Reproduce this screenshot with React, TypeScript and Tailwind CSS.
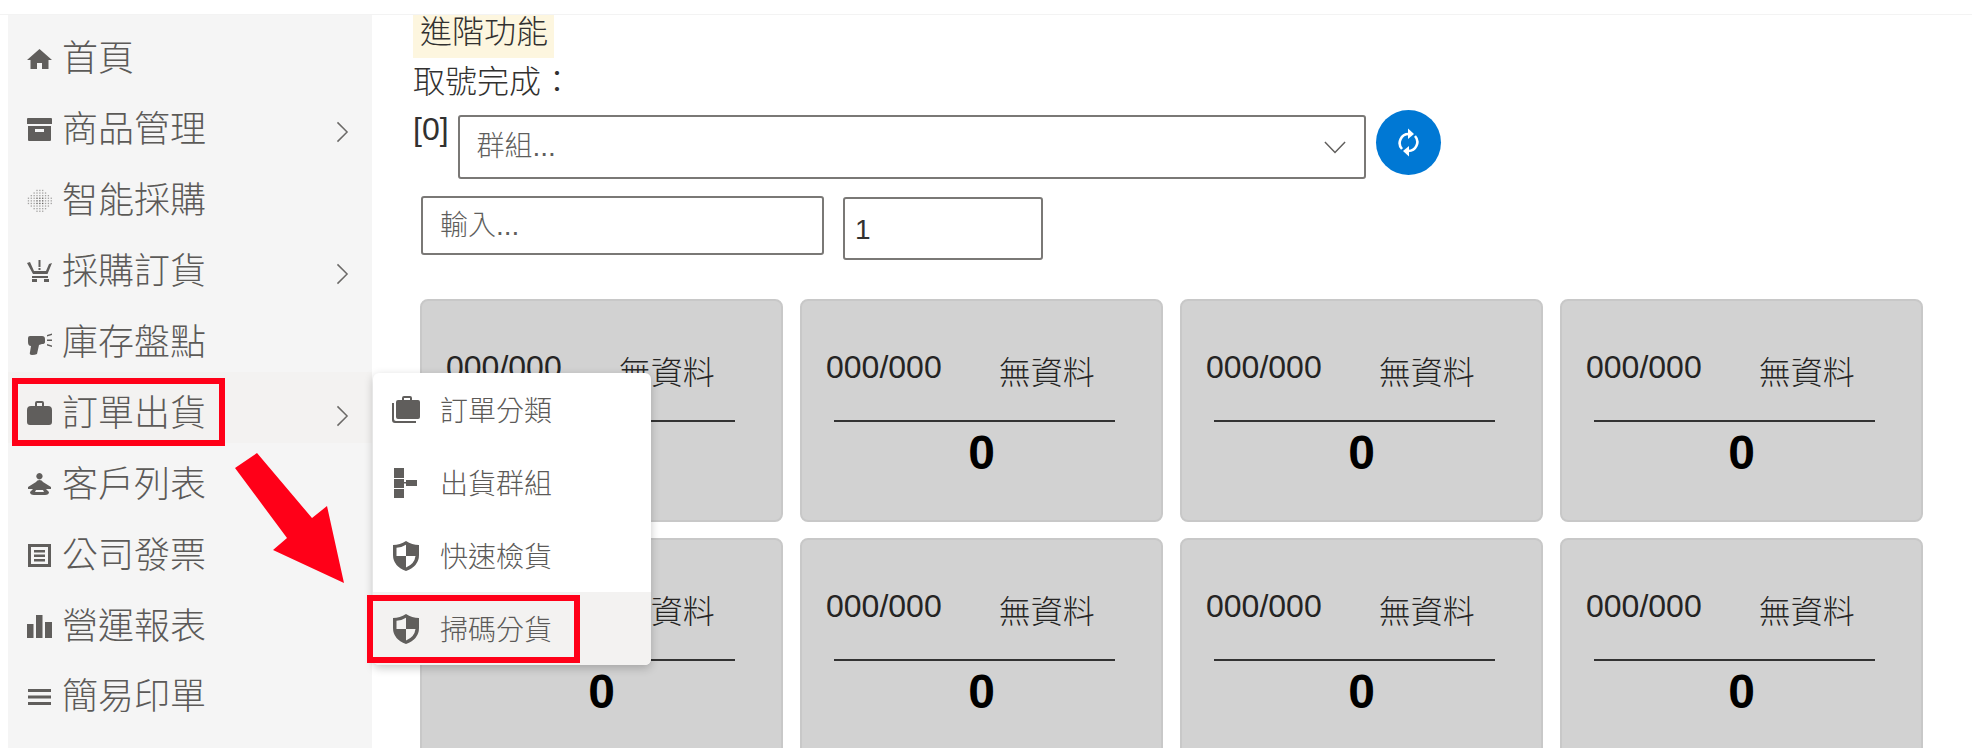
import React from "react";

const C = "#605e5c";

const Dots = () => {
  const items: React.ReactNode[] = [];
  for (let y = 0; y < 9; y++) for (let x = 0; x < 9; x++) {
    const d = Math.hypot(x - 4, y - 4);
    const cross = x === 3 || x === 4 || x === 5 || y === 3 || y === 4 || y === 5;
    if (d > 4.7 || (!cross && d > 3.7)) continue;
    items.push(<rect key={`${x}-${y}`} x={0.8 + x * 2.85} y={1.8 + y * 2.6} width={1.3} height={1.3} fill={C} opacity={d < 2 ? 1 : 0.55} />);
  }
  return <svg viewBox="0 0 25 25" className="w-[25px] h-[25px]">{items}</svg>;
};

const Icon = ({ d }: { d: string }) => (
  <svg viewBox="0 0 25 25" className="w-[25px] h-[25px]" fill={C} fillRule="evenodd"><path d={d} /></svg>
);

const paths = {
  home: "M12.5 3 L25 14 H21.5 V23 H15 V17 H10 V23 H3.5 V14 H0 Z",
  box: "M1 1 H24 Q25 1 25 2 V7 H0 V2 Q0 1 1 1 Z M1 9 H24 V23 Q24 24 23 24 H2 Q1 24 1 23 Z M8 12 V15 H17 V12 Z",
  cart: "M0 4 L3 3 L7 12 H19 L22 5 L25 4 L20.5 15 H6 Z M11.5 1 H13.5 V8 H11.5 Z M11.5 9 H13.5 V11 H11.5 Z M5 17 H21 V19 H5 Z M5 20 H10 V23 H5 Z M17 20 H22 V23 H17 Z",
  gun: "M3 6 H15 Q18 6 18 9 V12 Q18 14 15 14 L12 15 L10 24 Q8 25 5 25 Q2 25 3 22 L4 16 Q1 16 1 12 V8 Q1 6 3 6 Z M20 5 L25 3.5 V5 L20 6.5 Z M20 9.5 H25 V11 H20 Z M20 14 L25 15.5 V17 L20 15.5 Z",
  bag: "M8 6 V3 Q8 1 10 1 H15 Q17 1 17 3 V6 H21 Q25 6 25 10 V22 Q25 25 22 25 H3 Q0 25 0 22 V10 Q0 6 4 6 Z M10 6 H15 V3 H10 Z",
  person: "M12.5 2 A3.2 3.2 0 1 1 12.4 2 Z M12.5 9 Q15 9 16 11 L24 16 V18 L19 18 L22 21 Q22 24 18 24 H7 Q3 24 3 21 L6 18 L1 18 V16 L9 11 Q10 9 12.5 9 Z M9 19 L8 21 H17 L16 19 Z",
  invoice: "M1 2 H24 V25 H1 Z M4 5 V22 H21 V5 Z M7 8 H18 V10.5 H7 Z M7 12.5 H18 V15 H7 Z M7 17 H18 V19.5 H7 Z",
  bars: "M0 11 H6.5 V25 H0 Z M9 2 H15.5 V25 H9 Z M18 9 H25 V25 H18 Z",
  menu: "M1 5 H24 V8 H1 Z M1 11.5 H24 V14.5 H1 Z M1 18 H24 V21 H1 Z",
};

const Chevron = () => (
  <svg viewBox="0 0 14 24" className="w-[13px] h-[22px]" fill="none" stroke="#6b6967" strokeWidth="1.6"><path d="M1.5 1.5 L12 12 L1.5 22.5" /></svg>
);

const nav = [
  { t: "首頁", i: <Icon d={paths.home} /> },
  { t: "商品管理", i: <Icon d={paths.box} />, c: true },
  { t: "智能採購", i: <Dots /> },
  { t: "採購訂貨", i: <Icon d={paths.cart} />, c: true },
  { t: "庫存盤點", i: <Icon d={paths.gun} /> },
  { t: "訂單出貨", i: <Icon d={paths.bag} />, c: true, a: true },
  { t: "客戶列表", i: <Icon d={paths.person} /> },
  { t: "公司發票", i: <Icon d={paths.invoice} /> },
  { t: "營運報表", i: <Icon d={paths.bars} /> },
  { t: "簡易印單", i: <Icon d={paths.menu} /> },
];

const Shield = () => (
  <svg viewBox="0 0 26 30" className="w-[26px] h-[30px]" fill={C} fillRule="evenodd">
    <path d="M13 0 Q19 4 26 4 V14 Q26 25 13 30 Q0 25 0 14 V4 Q7 4 13 0 Z M13 15 H3.5 V6.8 Q9 6.5 13 3.8 Z M13 15 H22.5 Q21.5 23 13 26.5 Z" />
  </svg>
);

const menu = [
  {
    t: "訂單分類",
    i: (
      <svg viewBox="0 0 28 28" className="w-[28px] h-[28px]" fill={C} fillRule="evenodd">
        <path d="M2 7 V23 Q2 25 4 25 H24 V27 H3 Q0 27 0 24 V7 Z M10 4 V2 Q10 0 12 0 H18 Q20 0 20 2 V4 H26 Q28 4 28 6 V21 Q28 23 26 23 H6 Q4 23 4 21 V6 Q4 4 6 4 Z M12 4 H18 V2 H12 Z" />
      </svg>
    ),
  },
  {
    t: "出貨群組",
    i: (
      <svg viewBox="0 0 28 30" className="w-[28px] h-[30px]" fill={C}>
        <path d="M2 0 H12 V10 H2 Z M2 11 H12 V20 H2 Z M2 21 H12 V30 H2 Z M12 14 H14 V15.5 H12 Z M14 12 H25 V18 H14 Z" />
      </svg>
    ),
  },
  { t: "快速檢貨", i: <Shield /> },
  { t: "掃碼分貨", i: <Shield />, h: true },
];

const Card = () => (
  <div className="h-[223px] rounded-lg border-2 border-[#c8c8c8] bg-[#d2d2d2] pl-[24px] pt-[46px] text-black">
    <div className="flex h-[73px] items-start text-[32px] leading-[40px] text-[#252423]">
      <span>000/000</span>
      <span className="ml-[57px] mt-[6px] text-[32px] font-light">無資料</span>
    </div>
    <div className="ml-[8px] h-[2px] w-[281px] bg-[#333333]" />
    <div className="-ml-[24px] mt-[3px] h-[56px] text-center text-[48px] font-bold leading-[56px]">0</div>
  </div>
);

export default function App() {
  return (
    <div
      className="relative flex h-[748px] w-full overflow-hidden bg-white pt-[15px] text-[#323130]"
      style={{ fontFamily: '"Liberation Sans","Noto Sans CJK TC",sans-serif' }}
    >
      <div className="absolute left-0 right-0 top-[14px] h-px bg-[#f3f3f3]" />

      <aside className="ml-2 h-full w-[364px] shrink-0 bg-[#f5f5f5] pt-[3px]">
        {nav.map((n) => (
          <div key={n.t} className={`flex h-[70.9px] items-center pl-[19px] ${n.a ? "bg-[#f3f2f1]" : ""}`}>
            <span className="mt-[10px] flex w-[25px] justify-center">{n.i}</span>
            <span className="ml-[10px] mt-[12px] text-[36px] font-light leading-none text-[#5c5a58]">{n.t}</span>
            {n.c && (
              <span className="ml-auto mr-[23px] mt-[16px] flex">
                <Chevron />
              </span>
            )}
          </div>
        ))}
      </aside>

      <main className="min-w-0 flex-1 pl-[41px]">
        <div className="h-[43px] w-[141px] bg-[#fdf6df] pl-[7px] text-[32px] font-light leading-[34px]">進階功能</div>
        <div className="h-[48px] text-[32px] font-light leading-[48px]">取號完成：</div>
        <div className="flex items-start">
          <span className="mt-[3px] w-[44.5px] text-[32px] leading-[40px]">[0]</span>
          <div className="mt-[9px] flex h-[64px] w-[908px] items-center justify-between rounded-[3px] border-2 border-[#7a7876] pl-[17px] pr-[18px] text-[28px] font-light text-[#605e5c]">
            <span>群組...</span>
            <svg viewBox="0 0 24 14" className="h-[13px] w-[22px]" fill="none" stroke="#605e5c" strokeWidth="1.6"><path d="M1 1 L12 12.5 L23 1" /></svg>
          </div>
          <button className="ml-[10px] mt-[4px] flex h-[65px] w-[65px] items-center justify-center rounded-full bg-[#0078d4]">
            <svg viewBox="0 0 21 29" className="h-[29px] w-[21px]" fill="none" stroke="#ffffff" strokeWidth="2.6">
              <path d="M4 21 A9 9 0 0 1 11 6" />
              <path d="M17 8 A9 9 0 0 1 10 23" />
              <path d="M10 0.5 L16 6 L10 11 Z" fill="#ffffff" stroke="none" />
              <path d="M11 18 L5 23 L11 28.5 Z" fill="#ffffff" stroke="none" />
            </svg>
          </button>
        </div>
        <div className="ml-2 mt-[17px] flex items-start">
          <div className="flex h-[59px] w-[403px] items-center rounded-[3px] border-2 border-[#7a7876] pl-[17px] text-[28px] font-light text-[#605e5c]">輸入...</div>
          <div className="ml-[19px] mt-px flex h-[63px] w-[200px] items-center rounded-[3px] border-2 border-[#7a7876] pl-[10px] pt-[2px] text-[28px] text-[#323130]">1</div>
        </div>
        <div className="ml-[7px] mt-[39px] grid grid-cols-[repeat(4,363px)] gap-x-[17px] gap-y-[16px]">
          {Array.from({ length: 8 }).map((_, i) => (
            <Card key={i} />
          ))}
        </div>
      </main>

      {/* submenu flyout */}
      <div className="absolute left-[373px] top-[373px] w-[278px] overflow-hidden rounded-md bg-white shadow-[0_3px_10px_rgba(0,0,0,0.22)]">
        {menu.map((m) => (
          <div key={m.t} className={`flex h-[73px] items-center pl-[19px] ${m.h ? "bg-[#f3f2f1]" : ""}`}>
            <span className="flex w-[28px] justify-center">{m.i}</span>
            <span className="ml-[20px] mt-[4px] text-[28px] font-light leading-none text-[#5c5a58]">{m.t}</span>
          </div>
        ))}
      </div>

      {/* annotations */}
      <div className="absolute left-[12px] top-[378px] h-[68px] w-[213px] border-[6px] border-[#ff0018]" />
      <div className="absolute left-[367px] top-[595px] h-[68px] w-[213px] border-[6px] border-[#ff0018]" />
      <svg className="absolute left-[230px] top-[448px] h-[140px] w-[120px]" viewBox="230 448 120 140">
        <polygon points="235,468 257,453 312,518 327,506 344,583 273,550 287,538" fill="#ff0018" />
      </svg>
    </div>
  );
}
